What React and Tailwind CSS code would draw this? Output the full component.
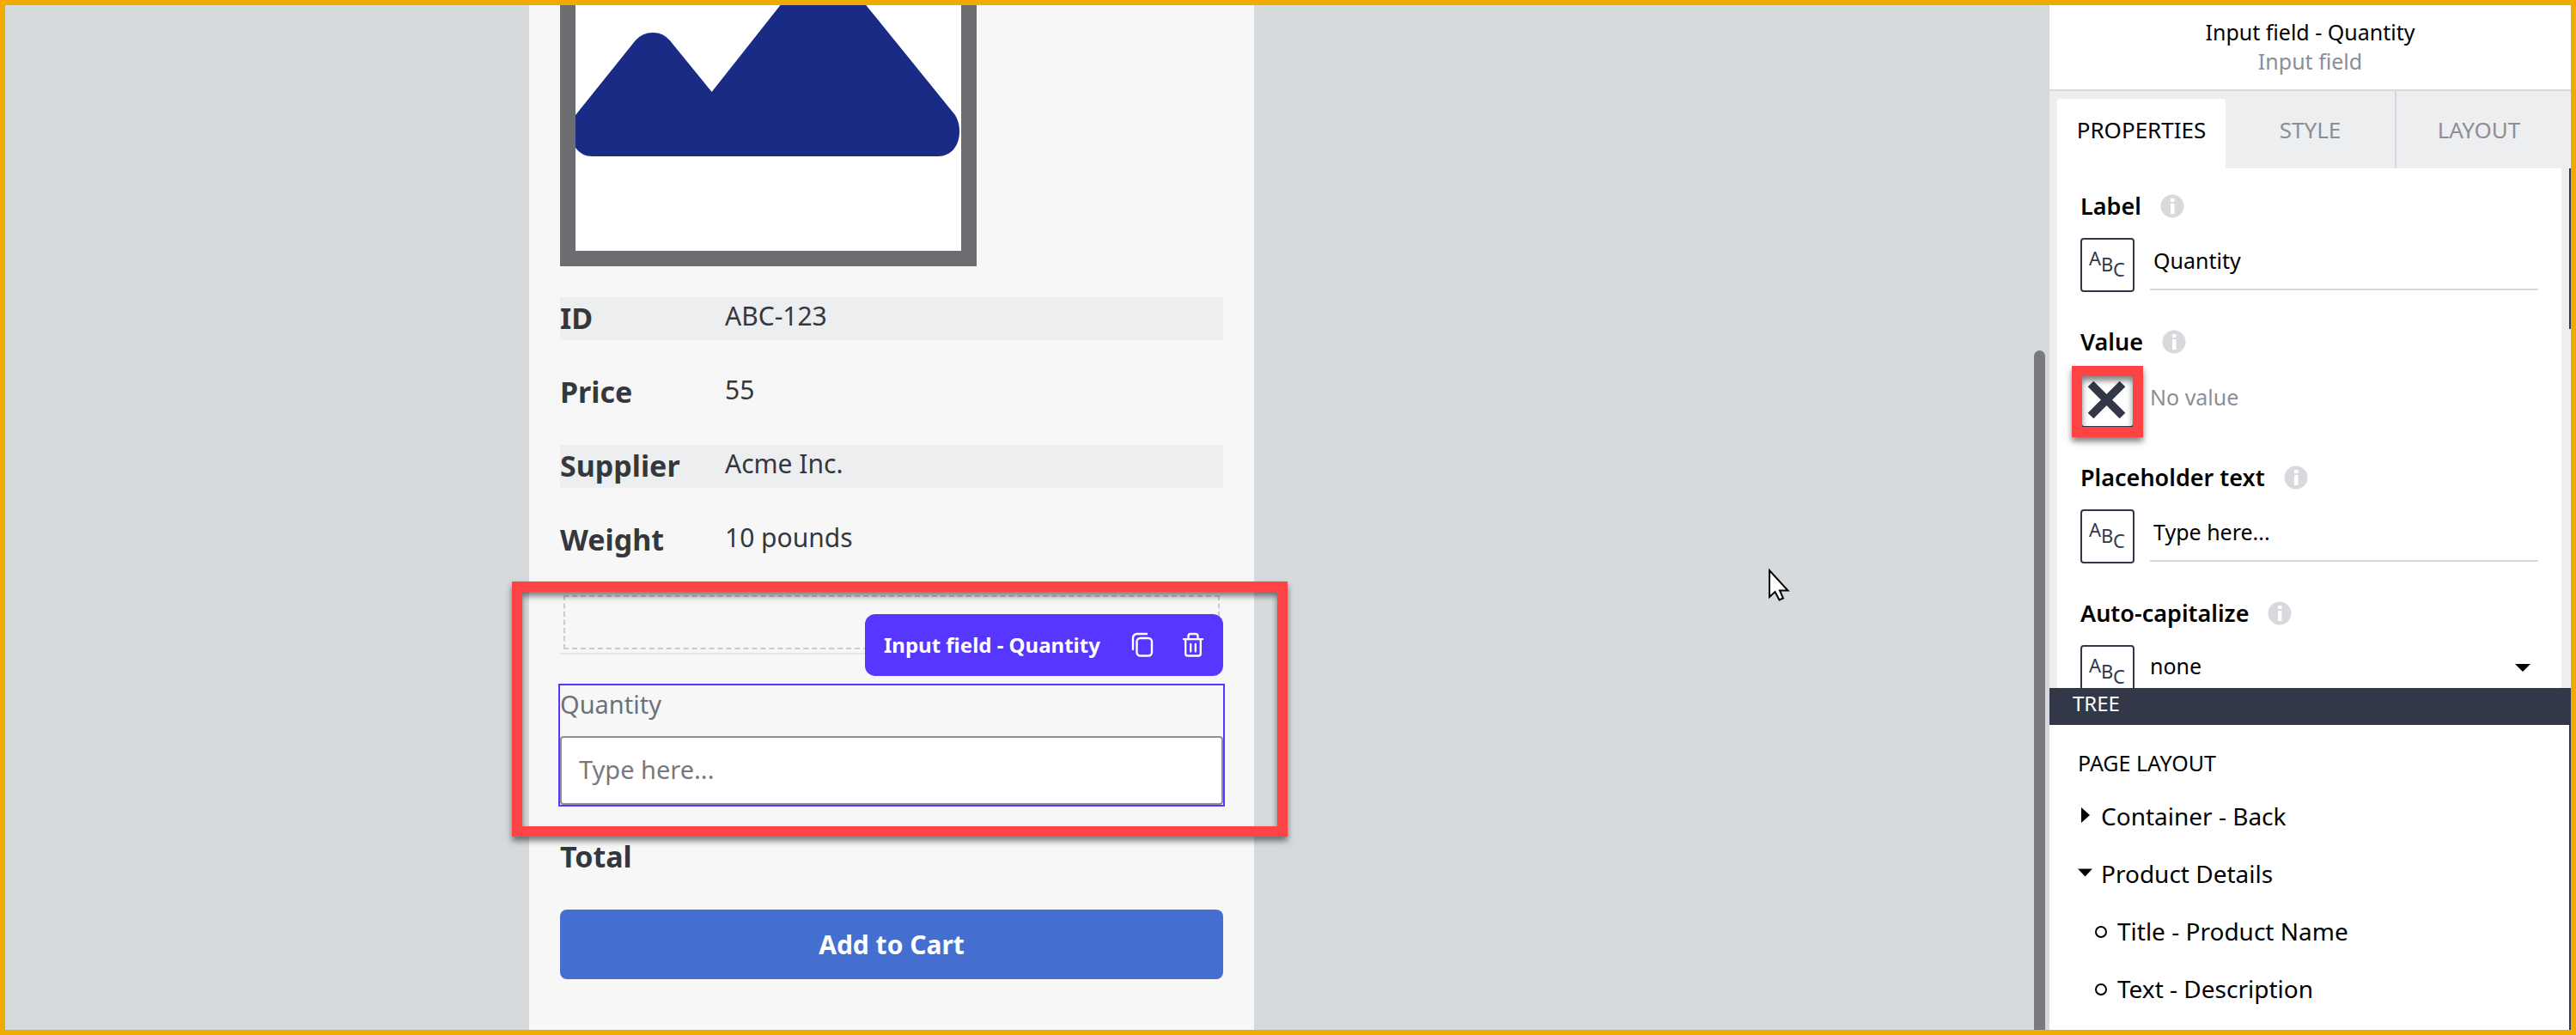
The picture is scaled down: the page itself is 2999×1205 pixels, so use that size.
import React from 'react';

const details = [
  { label: 'ID', value: 'ABC-123', shaded: true },
  { label: 'Price', value: '55', shaded: false },
  { label: 'Supplier', value: 'Acme Inc.', shaded: true },
  { label: 'Weight', value: '10 pounds', shaded: false },
];

function CopyIcon() {
  return (
    <svg width="26" height="30" viewBox="0 0 26 30" fill="none" stroke="currentColor" strokeWidth="2.4" strokeLinecap="round">
      <path d="M2 20V7q0-5 5-5h11" />
      <rect x="6.5" y="7" width="17.5" height="20.5" rx="4" />
    </svg>
  );
}

function TrashIcon() {
  return (
    <svg width="26" height="30" viewBox="0 0 26 30" fill="none" stroke="currentColor" strokeWidth="2.3" strokeLinecap="round" strokeLinejoin="round">
      <path d="M2 8.2h22" />
      <path d="M7.5 8V4.500q0-2.500 2.500-2.500h6q2.500 0 2.500 2.500V8" />
      <path d="M4.200 8.500V25q0 2.500 2.500 2.500h12.600q2.500 0 2.500-2.500V8.500" />
      <path d="M10.200 14v8.500M15.800 14v8.500" />
    </svg>
  );
}

function InfoIcon() {
  return (
    <svg width="28" height="28" viewBox="0 0 28 28">
      <circle cx="14" cy="14" r="13.500" fill="#d8d9dd" />
      <path d="M12 5h4.500v4h-4.500zM12 11h4.500v12h-4.500z" fill="#fff" />
    </svg>
  );
}

function TypeButton({ name }) {
  return (
    <button type="button" aria-label={name} className="size-[63px] shrink-0 rounded border-2 border-[#333848] bg-white">
      <svg width="59" height="59" viewBox="2 2 59 59" fill="#333848" fontSize="22">
        <text x="10" y="32">A</text>
        <text x="24" y="39">B</text>
        <text x="38" y="45">C</text>
      </svg>
    </button>
  );
}

function Property({ label, id, children }) {
  return (
    <div className="mb-10">
      <div className="mb-[19px] flex items-center gap-[22px]">
        <label htmlFor={id} className="text-[27px] leading-9 font-semibold text-black">{label}</label>
        <InfoIcon />
      </div>
      <div className="flex gap-[18px]">{children}</div>
    </div>
  );
}

function TextField({ id, value }) {
  return (
    <input
      id={id}
      type="text"
      defaultValue={value}
      className="h-[61px] min-w-0 flex-1 border-b-2 border-[#d8d9dd] pb-2 pl-1 text-[25px] text-black outline-none"
    />
  );
}

function ProductImage() {
  return (
    <div className="h-[304px] w-[485px] border-x-[18px] border-b-[18px] border-[#6c6d71] bg-white">
      <svg className="size-full" viewBox="670 6 450 286" preserveAspectRatio="none">
        <path
          fill="#1a2b85"
          d="M670 134L740 47Q748 38 760 38Q772 38 780 47L829 107L909 6H1009L1113 134Q1118 142 1118 153C1118 170 1108 182 1093 182H690Q677 182 670 172Z"
        />
      </svg>
    </div>
  );
}

function Phone() {
  return (
    <section className="h-full bg-[#f7f7f7] px-9 text-[#34383d]">
      <ProductImage />
      <dl className="mt-9 flex flex-col gap-9">
        {details.map((d) => (
          <div key={d.label} className={d.shaded ? 'flex h-[50px] bg-[#edeef0]' : 'flex h-[50px]'}>
            <dt className="w-48 text-[34px] leading-[48px] font-bold">{d.label}</dt>
            <dd className="text-[30px] leading-[44px]">{d.value}</dd>
          </div>
        ))}
      </dl>

      <div className="relative mt-9">
        <div className="h-[72px] border-b-2 border-[#e6e6e6] px-1 pt-[3px]">
          <div className="h-[63px] border-2 border-dashed border-[#cbcbcb]" />
        </div>
        <div className="-mx-0.5 mt-[34px] border-2 border-[#5736ff]">
          <label htmlFor="quantity" className="block text-[29px] leading-[44px] text-[#6f7175]">Quantity</label>
          <input
            id="quantity"
            type="text"
            placeholder="Type here..."
            className="mt-[15px] block h-20 w-full rounded border-2 border-[#8b9199] bg-white pr-5 pb-1 pl-5 text-[29px] outline-none placeholder:text-[#77797d]"
          />
        </div>
        <div className="absolute top-[25px] right-0 flex h-[72px] w-[417px] items-center justify-between rounded-xl bg-[#5736ff] px-[22px] text-white">
          <span className="text-2xl font-bold">Input field - Quantity</span>
          <span className="flex items-center gap-[33px]">
            <button type="button" aria-label="Duplicate"><CopyIcon /></button>
            <button type="button" aria-label="Delete"><TrashIcon /></button>
          </span>
        </div>
        <div className="pointer-events-none absolute -top-[13px] -right-[75px] -bottom-[35px] -left-[56px] border-[12px] border-[#fd4343] shadow-[0_5px_7px_rgba(0,0,0,0.5),inset_0_5px_7px_rgba(0,0,0,0.5)]" />
      </div>

      <div className="mt-[34px] h-[50px] text-[34px] leading-[48px] font-bold">Total</div>
      <button type="button" className="mt-9 h-[81px] w-full rounded-lg bg-[#446fd0] text-[30px] font-bold text-white">Add to Cart</button>
    </section>
  );
}

function Canvas() {
  return (
    <main className="relative grid min-w-0 flex-1 grid-cols-[610fr_844px_921fr] overflow-hidden border-r-[5px] border-[#d8d9dc] bg-[#d6dadd]">
      <div className="col-start-2 min-h-0">
        <Phone />
      </div>
      <svg className="absolute top-[655px] left-[2052px]" width="28" height="42" viewBox="0 0 28 42">
        <path d="M2 3V34L8.500 28L13.500 37.500L18 35.500L14 26.500H23.500Z" fill="#fff" stroke="#000" strokeWidth="2" />
      </svg>
      <div className="absolute top-[402px] right-0 bottom-0 w-[13px] rounded-t-full bg-[#797a7b]" />
    </main>
  );
}

function Panel() {
  return (
    <aside className="flex w-[607px] shrink-0 flex-col bg-white">
      <header className="h-[100px] border-b-2 border-[#d8d9dd] pt-3.5 text-center text-[25px] leading-[34px]">
        <h1 className="text-black">Input field - Quantity</h1>
        <p className="text-[#8b8e96]">Input field</p>
      </header>

      <div role="tablist" className="grid h-[90px] shrink-0 grid-cols-[196px_1fr_192px] bg-[#edeef0] pr-[11px] pl-[9px] text-[26px] text-[#8b8e96]">
        <button type="button" role="tab" aria-selected="true" className="mt-[9px] rounded-t bg-white pb-[9px] text-black">PROPERTIES</button>
        <button type="button" role="tab" aria-selected="false" className="border-r-2 border-[#d8d9dd]">STYLE</button>
        <button type="button" role="tab" aria-selected="false">LAYOUT</button>
      </div>

      <div className="relative min-h-0 flex-1 overflow-hidden bg-[#edeef0] pr-[11px] pl-[9px]">
        <div className="bg-white px-[27px] pt-[26px]">
          <Property label="Label" id="prop-label">
            <TypeButton name="Label binding type" />
            <TextField id="prop-label" value="Quantity" />
          </Property>
          <Property label="Value" id="prop-value">
            <div className="relative">
              <button type="button" id="prop-value" className="block size-[63px] rounded border-2 border-[#333848]">
                <svg width="59" height="59" viewBox="2 2 59 59" stroke="#333848" strokeWidth="9.500">
                  <path d="M12 12L49 49M49 12L12 49" />
                </svg>
              </button>
              <div className="pointer-events-none absolute -inset-x-2.5 -top-[9px] -bottom-[11px] border-[12px] border-[#fd4343] shadow-[0_5px_7px_rgba(0,0,0,0.5),inset_0_5px_7px_rgba(0,0,0,0.5)]" />
            </div>
            <span className="text-[25px] leading-[54px] text-[#8b8e96]">No value</span>
          </Property>
          <Property label="Placeholder text" id="prop-placeholder">
            <TypeButton name="Placeholder binding type" />
            <TextField id="prop-placeholder" value="Type here..." />
          </Property>
          <Property label="Auto-capitalize" id="prop-capitalize">
            <TypeButton name="Auto-capitalize binding type" />
            <div className="relative flex-1">
              <select id="prop-capitalize" className="h-[50px] w-full appearance-none bg-white text-[25px] text-black outline-none">
                <option>none</option>
              </select>
              <svg className="pointer-events-none absolute top-[22px] right-[9px]" width="18" height="9" viewBox="0 0 18 9">
                <path d="M0 0H18L9 9Z" />
              </svg>
            </div>
          </Property>
        </div>
        <div className="absolute top-0 right-0 h-[187px] w-0.5 bg-[#333848]" />
      </div>

      <section className="h-[398px] shrink-0 overflow-hidden text-black">
        <h2 className="h-[43px] bg-[#333848] pl-[27px] text-2xl leading-[36px] text-white">TREE</h2>
        <div className="h-[355px] border-r-2 border-[#333848] pt-[26px] pl-[33px]">
          <h3 className="mb-[11px] text-[25px] leading-9">PAGE LAYOUT</h3>
          <ul className="text-[28px] leading-[67px]">
            <li className="flex items-center gap-2.5">
              <svg className="mb-1" width="17" height="18" viewBox="0 0 17 18"><path d="M4 0L14 9L4 18Z" /></svg>
              Container - Back
            </li>
            <li>
              <div className="flex items-center gap-2.5">
                <svg className="mb-1" width="17" height="18" viewBox="0 0 17 18"><path d="M0 4.500H17L8.500 13.500Z" /></svg>
                Product Details
              </div>
              <ul className="pl-5">
                {['Title - Product Name', 'Text - Description'].map((name) => (
                  <li key={name} className="flex items-center gap-3">
                    <span className="size-3.5 rounded-full border-2 border-black" />
                    {name}
                  </li>
                ))}
              </ul>
            </li>
          </ul>
        </div>
      </section>
    </aside>
  );
}

export default function App() {
  return (
    <div className="flex h-screen overflow-hidden border-6 border-[#f0ab00] bg-white font-['Noto_Sans','Open_Sans',sans-serif]">
      <Canvas />
      <Panel />
    </div>
  );
}
